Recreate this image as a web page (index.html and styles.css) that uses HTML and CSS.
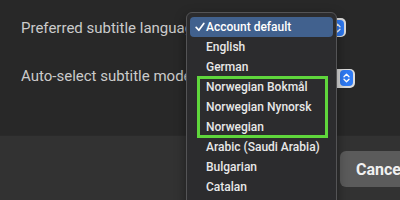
FILE: index.html
```html
<!DOCTYPE html>
<html lang="en">
<head>
    <meta charset="UTF-8">
    <title>Subtitle settings</title>
    <link rel="stylesheet" href="styles.css">
</head>
<body>

<div class="window">
    <div class="settings">
        <div class="row row-lang">
            <span class="label">Preferred subtitle language:</span>
            <div class="popup">
                <span class="stepper">
                    <svg width="7" height="10" viewBox="0 0 7 10"><path d="M1 3.8 L3.5 1.3 L6 3.8 M1 6.2 L3.5 8.7 L6 6.2" fill="none" stroke="#fff" stroke-width="1.4" stroke-linecap="round" stroke-linejoin="round"/></svg>
                </span>
            </div>
        </div>
        <div class="row row-mode">
            <span class="label">Auto-select subtitle mode:</span>
            <div class="popup">
                <span class="stepper">
                    <svg width="7" height="10" viewBox="0 0 7 10"><path d="M1 3.8 L3.5 1.3 L6 3.8 M1 6.2 L3.5 8.7 L6 6.2" fill="none" stroke="#fff" stroke-width="1.4" stroke-linecap="round" stroke-linejoin="round"/></svg>
                </span>
            </div>
        </div>
    </div>

    <div class="footer">
        <button class="btn-cancel">Cancel</button>
    </div>

    <!-- open popup menu -->
    <ul class="menu">
        <li class="item selected">
            <svg class="check" width="10" height="10" viewBox="0 0 10 10"><path d="M1.2 5.4 L3.8 8.3 L8.8 1.4" fill="none" stroke="#fff" stroke-width="1.7" stroke-linecap="round" stroke-linejoin="round"/></svg>
            Account default
        </li>
        <li class="item">English</li>
        <li class="item">German</li>
        <li class="item">Norwegian Bokmål</li>
        <li class="item">Norwegian Nynorsk</li>
        <li class="item">Norwegian</li>
        <li class="item">Arabic (Saudi Arabia)</li>
        <li class="item">Bulgarian</li>
        <li class="item">Catalan</li>
    </ul>

    <div class="highlight-box"></div>
</div>

</body>
</html>
```

FILE: styles.css
```css
body {
    margin: 0;
    background: #323232;
    font-family: Roboto, "Liberation Sans", Arial, sans-serif;
}

.window {
    position: relative;
    width: 400px;
    height: 200px;
    overflow: hidden;
    background: #323232;
}

.settings {
    height: 131px;
    padding-top: 4px;
    background: #282828;
}

.row {
    display: flex;
    align-items: center;
    height: 48px;
    padding-left: 21px;
}

.label {
    flex: none;
    width: 168px;
    white-space: nowrap;
    color: #cbcbcb;
    font-size: 15px;
}

.popup {
    position: relative;
    display: flex;
    justify-content: flex-end;
    align-items: center;
    box-sizing: border-box;
    height: 19px;
    padding-right: 2px;
    border-radius: 5px;
    background: #dcdcdc;
}

.row-lang .popup {
    width: 140px;
    margin-left: 17px;
    margin-top: -1px;
}

.row-mode .popup {
    width: 140px;
    margin-left: 26px;
    margin-top: 4px;
}

.stepper {
    display: flex;
    align-items: center;
    justify-content: center;
    width: 13px;
    height: 16px;
    border-radius: 4px;
    background: #2f7bf5;
}

.footer {
    display: flex;
    padding: 15px 0 0 340px;
    border-top: 1px solid #2a2a2a;
}

.btn-cancel {
    flex: none;
    width: 90px;
    height: 36px;
    padding: 0 0 0 16px;
    border: none;
    border-radius: 6px;
    background: #5b5b5b;
    color: #f0f0f0;
    font-family: Roboto, "Liberation Sans", Arial, sans-serif;
    font-size: 16px;
    font-weight: 700;
    text-align: left;
}

.menu {
    position: absolute;
    left: 186px;
    top: 12px;
    width: 143px;
    height: 210px;
    margin: 0;
    padding: 4px 3px;
    list-style: none;
    background: #2c2c2e;
    border: 1px solid #545456;
    border-radius: 6px;
    box-shadow: 0 4px 12px rgba(0, 0, 0, 0.4);
}

.item {
    position: relative;
    height: 20px;
    line-height: 21px;
    padding-left: 16px;
    color: #e8e8e8;
    font-size: 12px;
    font-weight: 500;
    white-space: nowrap;
}

.item.selected {
    background: #41618e;
    border-radius: 4px;
    color: #fff;
}

.check {
    position: absolute;
    left: 5px;
    top: 5px;
}

.highlight-box {
    position: absolute;
    left: 197px;
    top: 76px;
    width: 125px;
    height: 56px;
    border: 3px solid #5fd63c;
}
```
